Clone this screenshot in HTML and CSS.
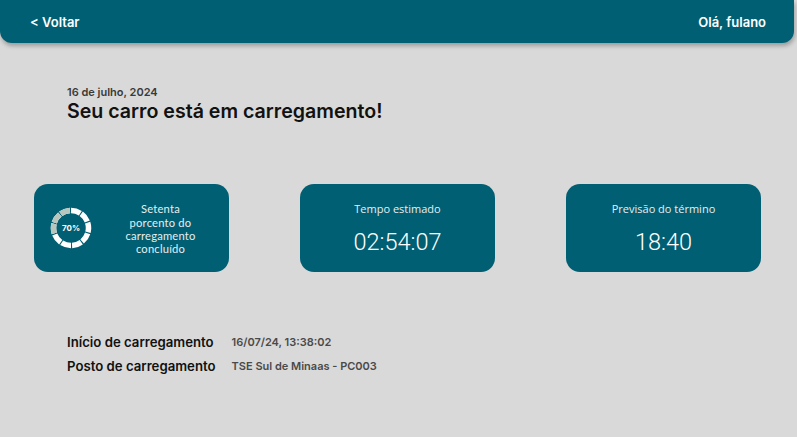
FILE: index.html
```html
<!DOCTYPE html>
<html lang="pt-BR">
<head>
<meta charset="utf-8">
<title>Carregamento</title>
<link rel="stylesheet" href="styles.css">
</head>
<body>
<header class="topbar">
  <a class="back" href="#">&lt; Voltar</a>
  <span class="greet">Olá, fulano</span>
</header>
<main class="content">
  <section class="heading">
    <div class="date">16 de julho, 2024</div>
    <h1 class="title">Seu carro está em carregamento!</h1>
  </section>
  <section class="cards">
    <div class="card card-progress">
      <div class="ring">
        <svg width="42" height="42" viewBox="0 0 42 42">
          <g fill="none" stroke-width="5.5">
            <circle cx="21" cy="21" r="17.5" stroke="#ffffff" pathLength="100" stroke-dasharray="9 1" transform="rotate(-90 21 21)"/>
            <circle cx="21" cy="21" r="17.5" stroke="#b8c6bd" pathLength="100" stroke-dasharray="0 70 9 1 9 1 9 1" transform="rotate(-90 21 21)"/>
          </g>
        </svg>
        <span class="ring-label">70%</span>
      </div>
      <p class="progress-text">Setenta<br>porcento do<br>carregamento<br>concluído</p>
    </div>
    <div class="card card-stat">
      <div class="stat-label">Tempo estimado</div>
      <div class="stat-value">02:54:07</div>
    </div>
    <div class="card card-stat">
      <div class="stat-label">Previsão do término</div>
      <div class="stat-value">18:40</div>
    </div>
  </section>
  <section class="info">
    <div class="info-row"><span class="info-key">Início de carregamento</span><span class="info-val">16/07/24, 13:38:02</span></div>
    <div class="info-row"><span class="info-key">Posto de carregamento</span><span class="info-val">TSE Sul de Minaas - PC003</span></div>
  </section>
</main>
</body>
</html>
```

FILE: styles.css
```css
* { box-sizing: border-box; }
html, body { margin: 0; padding: 0; }
body {
  background: #d9d9d9;
  font-family: Inter, "Liberation Sans", sans-serif;
  width: 797px;
  height: 437px;
  overflow: hidden;
}
.topbar {
  width: 794px;
  height: 43px;
  background: #005f73;
  border-radius: 0 0 12px 12px;
  box-shadow: 1px 3px 4px rgba(0, 0, 0, 0.28);
  display: flex;
  align-items: center;
  justify-content: space-between;
  padding: 0 28px 0 30px;
  color: #ffffff;
  font-weight: 600;
  font-size: 13px;
}
.back { color: #ffffff; text-decoration: none; }
.content { padding: 43px 0 0 0; }
.heading { padding-left: 67px; }
.date {
  font-size: 11px;
  font-weight: 600;
  color: #3a3a3a;
  line-height: 13px;
}
.title {
  margin: 0;
  font-size: 19.6px;
  font-weight: 600;
  color: #111111;
  line-height: 24px;
}
.cards {
  display: flex;
  justify-content: space-between;
  padding: 0 36px 0 34px;
  margin-top: 61px;
}
.card {
  width: 195px;
  height: 88px;
  background: #005f73;
  border-radius: 14px;
  color: #e6eef0;
  font-family: "Open Sans", sans-serif;
}
.card-progress {
  display: flex;
  align-items: center;
  padding-left: 16px;
}
.ring {
  position: relative;
  width: 42px;
  height: 42px;
}
.ring svg { display: block; }
.ring-label {
  position: absolute;
  inset: 0;
  display: flex;
  align-items: center;
  justify-content: center;
  font-family: Inter, sans-serif;
  font-size: 8px;
  font-weight: 700;
  color: #ffffff;
}
.progress-text {
  margin: 0;
  flex: 1;
  text-align: center;
  font-family: Lato, sans-serif;
  font-size: 11.2px;
  line-height: 13.4px;
  letter-spacing: 0.2px;
  padding-top: 2px;
}
.card-stat {
  display: flex;
  flex-direction: column;
  align-items: center;
  padding-top: 18px;
}
.stat-label { font-size: 11px; line-height: 14px; }
.stat-value {
  font-family: Roboto, sans-serif;
  font-size: 23.5px;
  font-weight: 300;
  line-height: 28px;
  margin-top: 12px;
  color: #ffffff;
}
.info {
  padding-left: 67px;
  margin-top: 61px;
  display: grid;
  grid-template-columns: auto 1fr;
  row-gap: 5px;
  column-gap: 16px;
}
.info-row { display: contents; }
.info-key {
  font-size: 13.2px;
  font-weight: 600;
  color: #111111;
  line-height: 19px;
}
.info-val {
  font-size: 11px;
  font-weight: 600;
  color: #4a4a4a;
  line-height: 19px;
}
```
